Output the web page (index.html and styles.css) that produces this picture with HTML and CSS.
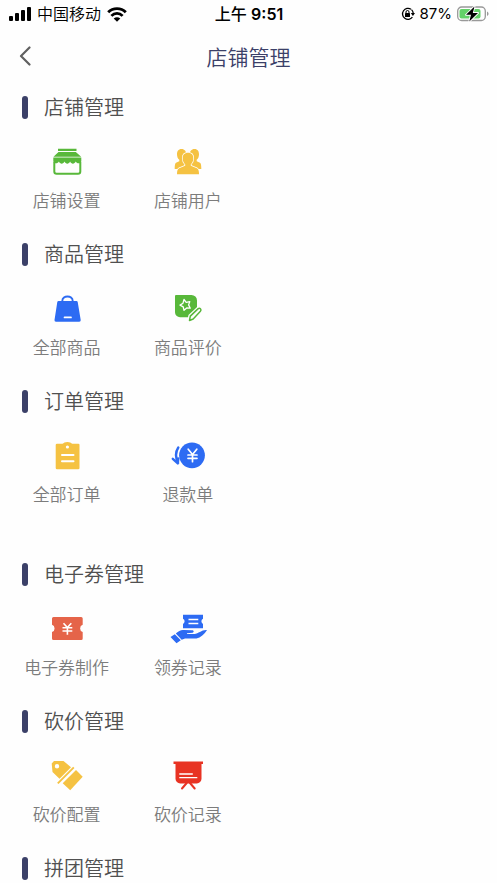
FILE: index.html
```html
<!DOCTYPE html>
<html lang="zh-CN">
<head>
<meta charset="utf-8">
<meta name="viewport" content="width=device-width, initial-scale=1">
<title>店铺管理</title>
<link rel="stylesheet" href="styles.css">
</head>
<body>
<div class="status">
  <div class="status-left">
    <svg width="22" height="14" viewBox="0 0 22 14" aria-hidden="true"><rect y="9" width="4" height="5" rx="1"/><rect x="6" y="6" width="4" height="8" rx="1"/><rect x="12" y="3" width="4" height="11" rx="1"/><rect x="18" width="4" height="14" rx="1"/></svg>
    <span class="carrier">中国移动</span>
    <svg width="20" height="15" viewBox="0 0 20 15" aria-hidden="true"><path d="M1.200 5.300C6 .3 14 .3 18.800 5.300M4.400 8.900c3.200-3.300 8-3.300 11.200 0" fill="none" stroke="#000" stroke-width="2.800"/><path d="M6.700 11.400c2-1.700 4.600-1.700 6.600 0L10 14.800z"/></svg>
  </div>
  <div class="time">上午 <span class="digits">9:51</span></div>
  <div class="status-right">
    <svg width="14" height="14" viewBox="0 0 14 14" aria-hidden="true"><path d="M10 2.200A5.500 5.500 0 1 0 11.400 10.200M10.500 2.600A5.500 5.500 0 0 1 12.200 6" fill="none" stroke="#000" stroke-width="1.300"/><path d="M9.800 6H14l-2.100 3z"/><rect x="4" y="6" width="5" height="4" rx=".5"/><path d="M5 6V5a1.500 1.500 0 0 1 3 0v1" fill="none" stroke="#000"/></svg>
    <span class="percent">87%</span>
    <svg width="32" height="16" viewBox="0 0 32 16" aria-hidden="true"><rect x=".7" y="1" width="27.600" height="13.500" rx="4" fill="none" stroke="#999" stroke-width="1.300"/><rect x="2.500" y="3" width="21" height="9.500" rx="2" fill="#63d168"/><path d="M30 5.500v4.500c2-.8 2-3.700 0-4.500" fill="#999"/><path d="M17.500.5 9 8.800h5L12.300 15.500 21 7h-5.200z" stroke="#fff" stroke-width="1.800" paint-order="stroke" stroke-linejoin="round"/></svg>
  </div>
</div>
<header class="nav">
  <button class="back" type="button" aria-label="返回"><svg width="12" height="20" viewBox="0 0 12 20" aria-hidden="true"><path d="M10.500 1.500 2 10l8.500 8.500" fill="none" stroke="#606060" stroke-width="2.200" stroke-linecap="round" stroke-linejoin="round"/></svg></button>
  <h1>店铺管理</h1>
</header>
<main>
  <section>
    <h2>店铺管理</h2>
    <div class="grid">
      <a class="item" href="#shop-settings">
        <svg viewBox="0 0 44 36" fill="#58b83a" aria-hidden="true"><path d="M13 4.700h18.500V7H13zM13.500 8h17.300l5.400 4.700H8.500zM8.300 13.500h28v3.500c0 2.700-4.400 3.300-5.600.6-1.200 2.700-4.400 2.700-5.600 0-1.200 2.700-4.400 2.700-5.600 0-1.200 2.700-4.400 2.700-5.600 0-1.200 2.700-5.600 2.100-5.600-.6z"/><path d="M9.300 18v9.500a2.300 2.300 0 0 0 2.300 2.300h21.400a2.300 2.300 0 0 0 2.300-2.300V18" fill="none" stroke="#58b83a" stroke-width="2"/></svg>
        <span>店铺设置</span>
      </a>
      <a class="item" href="#shop-users">
        <svg viewBox="0 0 44 36" fill="#f5c242" aria-hidden="true"><path d="M15.500 5c3.200 0 4.700 2.300 4.700 5.200 0 2.400-.8 4.500-2 5.700v1.600l6 2V25H8.700c0-3.300.2-5.500 1.300-6.300l3.300-1.400v-1.500C11.700 14.600 11 12.300 11 10.200 11 7.300 12.300 5 15.500 5z"/><path d="M28.500 5c-3.200 0-4.700 2.300-4.700 5.200 0 2.400.8 4.500 2 5.700v1.600l-6 2V25h15.500c0-3.300-.2-5.500-1.300-6.300l-3.300-1.400v-1.500c1.600-1.200 2.300-3.500 2.300-5.600C33 7.300 31.700 5 28.500 5z"/><path d="M22 8.800c3.700 0 5.300 2.300 5.300 5.500 0 2.700-1 4.700-2.500 6v1.500l6 2.500c1.700.8 2.200 2.700 2.200 6H11c0-3.300.5-5.200 2.200-6l6-2.500v-1.500c-1.500-1.300-2.500-3.300-2.500-6 0-3.200 1.600-5.500 5.300-5.500z" stroke="#fefefe" stroke-width="1.600" paint-order="stroke"/></svg>
        <span>店铺用户</span>
      </a>
    </div>
  </section>
  <section>
    <h2>商品管理</h2>
    <div class="grid">
      <a class="item" href="#goods">
        <svg viewBox="0 0 44 36" fill="#2d6bf3" aria-hidden="true"><path d="M13.500 10h18a1.300 1.300 0 0 1 1.200 1l3 18a1.500 1.500 0 0 1-1.500 1.700H11A1.500 1.500 0 0 1 9.500 29l2.800-18a1.300 1.300 0 0 1 1.200-1z"/><path d="M17.300 11v-1c0-6 10.400-6 10.400 0v1" fill="none" stroke="#2d6bf3" stroke-width="1.900"/><path d="M19.500 26.400h6.500" stroke="#fff" stroke-width="1.700" stroke-linecap="round"/></svg>
        <span>全部商品</span>
      </a>
      <a class="item" href="#reviews">
        <svg viewBox="0 0 44 36" fill="#58b83a" aria-hidden="true"><path d="M10 4h15.500a5.500 5.500 0 0 1 5.500 5.500v7.800l-9 9h-8A5 5 0 0 1 9 21.300V5a1 1 0 0 1 1-1z"/><path d="m18 8.500 2.200 2.800 3.600-.7-1.200 3.300 1.700 3.300-3.600-.2-2.700 2.300-.8-3.400-3.200-1.800 3-1.900z" fill="none" stroke="#fff" stroke-width="1.300" stroke-linejoin="round"/><path d="m23.500 29.500.8-4.400 7.600-7.200c2-1.600 4 .5 2.500 2.400l-7.200 7.700z" fill="#fefefe" stroke="#fefefe" stroke-width="4"/><path d="m23.500 29.500.8-4.400 7.600-7.200c2-1.600 4 .5 2.500 2.400l-7.200 7.700z" fill="#fefefe" stroke="#58b83a" stroke-width="1.500" stroke-linejoin="round"/></svg>
        <span>商品评价</span>
      </a>
    </div>
  </section>
  <section class="orders">
    <h2>订单管理</h2>
    <div class="grid">
      <a class="item" href="#orders">
        <svg viewBox="0 0 44 36" fill="#f5c242" aria-hidden="true"><path d="M12 5.700h5.500C18.700 5 20 4 22.400 4s3.700 1 4.900 1.700h6A1.200 1.200 0 0 1 34.500 7v23a1.300 1.300 0 0 1-1.300 1.300H12A1.300 1.300 0 0 1 10.700 30V7A1.300 1.300 0 0 1 12 5.700z"/><circle cx="22.400" cy="9" r="1.600" fill="#fff"/><path d="M17 17h11.500M17 23.300h11.500" stroke="#fff" stroke-width="2" stroke-linecap="round"/></svg>
        <span>全部订单</span>
      </a>
      <a class="item" href="#refunds">
        <svg viewBox="0 0 44 36" fill="#2d6bf3" aria-hidden="true"><circle cx="26" cy="17.300" r="12.900"/><path d="m22.200 11.200 4.300 5.300 4.300-5.300M26.500 16.500v7.200M22 17h9M22 20.300h9" fill="none" stroke="#fff" stroke-width="1.700" stroke-linecap="round"/><path d="M12.300 9.500c-2.800 4.300-2.900 10-.2 15.500M6.800 20.800l5 4.700.5-5" fill="none" stroke="#2d6bf3" stroke-width="2.400" stroke-linecap="round" stroke-linejoin="round"/></svg>
        <span>退款单</span>
      </a>
    </div>
  </section>
  <section>
    <h2>电子券管理</h2>
    <div class="grid">
      <a class="item" href="#coupon-create">
        <svg viewBox="0 0 44 36" fill="#e56449" aria-hidden="true"><path d="M8.500 6h27.700a1.500 1.500 0 0 1 1.500 1.500v6.300a3.800 3.800 0 0 0 0 7.200v6.500a1.500 1.500 0 0 1-1.500 1.500H8.500A1.500 1.500 0 0 1 7 27.500V21a3.800 3.800 0 0 0 0-7.200V7.500A1.500 1.500 0 0 1 8.500 6z"/><path d="m18.500 12.300 3.900 4.200 3.900-4.200M22.400 16.500v7.200M17.500 16.800h9.800M17.500 20h9.800" fill="none" stroke="#fff" stroke-width="1.600"/></svg>
        <span>电子券制作</span>
      </a>
      <a class="item" href="#coupon-records">
        <svg viewBox="0 0 44 36" fill="#2d6bf3" aria-hidden="true"><path d="M17 3.700h20v4a3 3 0 0 0 0 5.300v4.300H17V13a3 3 0 0 0 0-5.300z"/><path d="M22.500 8.500h9.800M22.500 12.500h9.800" stroke="#fff" stroke-width="1.300"/><path d="m4.500 26 4.300-2.800 6 6-4.300 3zM9.800 22.500c3-2.500 5-3.700 8-3.400l8.200.2c2 0 2.300 2 .5 2.400l-5.500.6v.8h7.500c4-.4 7.500-4.600 12.500-4-2.500 4-6.500 7.900-10.500 8.400H19l-3.300 1.200z"/></svg>
        <span>领券记录</span>
      </a>
    </div>
  </section>
  <section>
    <h2>砍价管理</h2>
    <div class="grid">
      <a class="item" href="#bargain-settings">
        <svg viewBox="0 0 44 36" fill="#f5c242" aria-hidden="true"><path fill-rule="evenodd" d="M9 2.900h9.500l7.500 6.400-11.500 11.500L7.500 14 6.700 5.500zM12 6a2.200 2.200 0 1 0 0 4.400A2.200 2.200 0 0 0 12 6z"/><path d="m12.800 25.300 16-16" stroke="#f5c242" stroke-width="1.900"/><path d="m31 12 6.700 6.800-12.500 13.500-7.500-7z"/></svg>
        <span>砍价配置</span>
      </a>
      <a class="item" href="#bargain-records">
        <svg viewBox="0 0 44 36" fill="#e83323" aria-hidden="true"><path d="M7.500 3.400H37V6h-1.500v14.800a4.700 4.700 0 0 1-4.700 4.700H14.200a4.700 4.700 0 0 1-4.700-4.700V6h-2z"/><path d="m20.700 25-4.700 5.500M24 25l4.700 5.500" stroke="#e83323" stroke-width="2" stroke-linecap="round"/><path d="M13.300 16h13.500M13.300 19.700h18" stroke="#fff" stroke-width="1.300"/></svg>
        <span>砍价记录</span>
      </a>
    </div>
  </section>
  <section>
    <h2>拼团管理</h2>
  </section>
</main>
</body>
</html>
```
FILE: styles.css
```css
* { box-sizing: border-box; }

body {
  margin: 0;
  background: #fefefe;
  font-family: "Noto Sans CJK SC", sans-serif;
  font-weight: 350;
}

svg { display: block; flex: none; }

.status {
  display: grid;
  grid-template-columns: 1fr auto 1fr;
  align-items: center;
  height: 28px;
  padding: 0 8px 0 9px;
  font-family: Inter, "Noto Sans CJK SC", sans-serif;
  font-size: 16px;
  font-weight: 400;
  line-height: 24px;
  color: #000;
}

.status-left,
.status-right {
  display: flex;
  align-items: center;
  gap: 6px;
}

.status-right {
  justify-content: flex-end;
  gap: 5px;
}

.carrier { font-weight: 350; }

.percent { font-size: 15px; }

.time { font-weight: 500; }

.digits { font-weight: 600; }

.nav {
  display: grid;
  grid-template-columns: 48px 1fr 48px;
  align-items: center;
  height: 56px;
}

.back {
  display: flex;
  align-items: center;
  height: 44px;
  padding: 0 0 0 19px;
  border: 0;
  background: none;
}

h1 {
  margin: 0;
  font-size: 21px;
  font-weight: 350;
  line-height: 30px;
  text-align: center;
  color: #3b4068;
}

main { padding: 11px 6px 0; }

section + section { margin-top: 30px; }

.orders + section { margin-top: 56px; }

h2 {
  display: flex;
  align-items: center;
  gap: 16px;
  margin: 0;
  padding-left: 16px;
  font-size: 20px;
  font-weight: 350;
  line-height: 24px;
  color: #505050;
}

h2::before {
  content: "";
  width: 6px;
  height: 23px;
  border-radius: 3px;
  background: #3b4068;
}

.grid {
  display: grid;
  grid-template-columns: repeat(4, 1fr);
  margin-top: 25px;
}

.item {
  display: flex;
  flex-direction: column;
  align-items: center;
  gap: 8px;
  font-size: 17px;
  line-height: 24px;
  color: #7c7c7c;
  text-decoration: none;
}

.item svg {
  width: 44px;
  height: 36px;
}
```
